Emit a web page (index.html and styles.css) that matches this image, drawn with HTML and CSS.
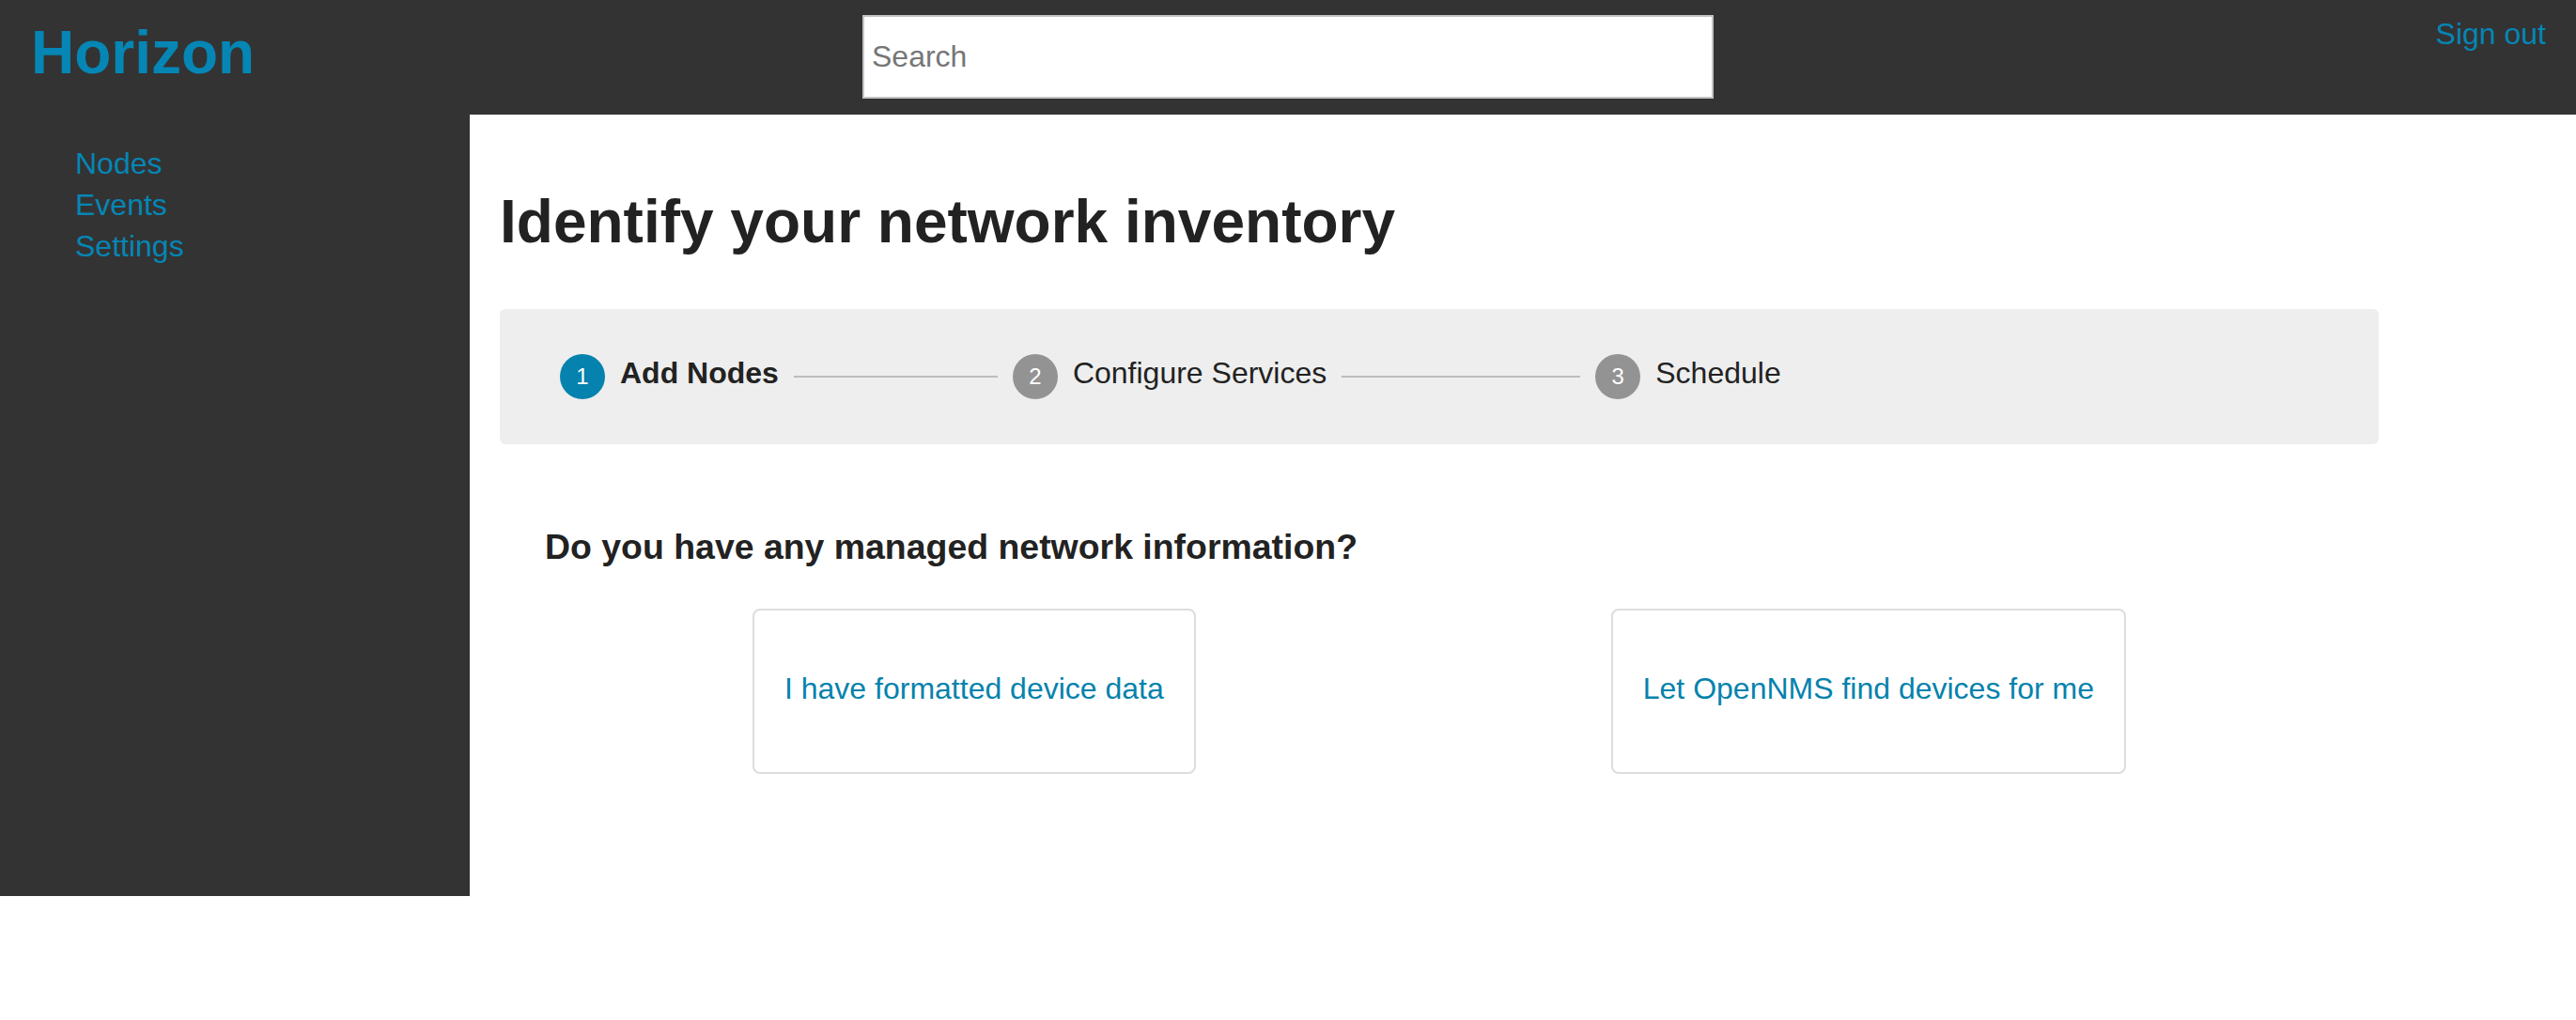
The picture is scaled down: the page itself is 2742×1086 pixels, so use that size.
FILE: index.html
```html
<!DOCTYPE html>
<html lang="en">
<head>
<meta charset="utf-8">
<title>Horizon</title>
<link rel="stylesheet" href="styles.css">
</head>
<body>
<header class="topbar">
  <a class="logo" href="#">Horizon</a>
  <input class="search" type="text" placeholder="Search">
  <a class="signout" href="#">Sign out</a>
</header>
<div class="layout">
  <nav class="sidebar">
    <a class="nav-link" href="#">Nodes</a>
    <a class="nav-link" href="#">Events</a>
    <a class="nav-link" href="#">Settings</a>
  </nav>
  <main class="main">
    <h1 class="title">Identify your network inventory</h1>
    <div class="stepper">
      <div class="step active"><span class="step-num">1</span><span class="step-label">Add Nodes</span></div>
      <span class="step-line line-a"></span>
      <div class="step"><span class="step-num">2</span><span class="step-label">Configure Services</span></div>
      <span class="step-line line-b"></span>
      <div class="step"><span class="step-num">3</span><span class="step-label">Schedule</span></div>
    </div>
    <section class="question">
      <h3 class="question-title">Do you have any managed network information?</h3>
      <div class="choices">
        <a class="choice" href="#">I have formatted device data</a>
        <a class="choice" href="#">Let OpenNMS find devices for me</a>
      </div>
    </section>
  </main>
</div>
</body>
</html>
```
FILE: styles.css
```css
* { box-sizing: border-box; }
html, body {
  margin: 0;
  padding: 0;
  background: #ffffff;
  font-family: "Liberation Sans", Arial, Helvetica, sans-serif;
  font-size: 32px;
  line-height: 44px;
  color: #222222;
}
a { text-decoration: none; color: #0582ad; }

.topbar {
  display: grid;
  grid-template-columns: 1fr 906px 1fr;
  align-items: start;
  height: 122px;
  padding: 0 32px;
  background: #333333;
}
.logo {
  justify-self: start;
  margin: 20px 0 0 1px;
  font-size: 64px;
  line-height: 72px;
  font-weight: bold;
  color: #0586b5;
}
.search {
  margin-top: 16px;
  width: 906px;
  height: 89px;
  border: 2px solid #c4c4c4;
  padding: 0 8px;
  font-family: "Liberation Sans", Arial, sans-serif;
  font-size: 32px;
  color: #222;
  background: #fff;
  outline: none;
}
.search::placeholder { color: #767676; }
.signout {
  justify-self: end;
  margin-top: 14px;
  font-size: 32px;
  line-height: 44px;
  color: #0586b5;
}

.layout {
  display: flex;
  align-items: stretch;
}
.sidebar {
  flex: 0 0 500px;
  background: #333333;
  display: flex;
  flex-direction: column;
  align-items: flex-start;
  padding: 30px 0 0 80px;
}
.nav-link {
  font-size: 32px;
  line-height: 44px;
  color: #0586b5;
}

.main {
  flex: 1;
  padding: 70px 32px 130px 32px;
}
.title {
  margin: 0 0 49px 0;
  font-size: 64px;
  line-height: 88px;
  font-weight: bold;
  color: #222222;
}
.stepper {
  max-width: 2000px;
  height: 144px;
  display: flex;
  align-items: center;
  padding: 0 64px;
  background: #eeeeee;
  border-radius: 6px;
}
.step {
  display: flex;
  align-items: center;
  gap: 16px;
}
.step-num {
  width: 48px;
  height: 48px;
  border-radius: 50%;
  background: #939393;
  color: #ffffff;
  font-size: 24px;
  line-height: 48px;
  text-align: center;
}
.step.active .step-num { background: #0582ad; }
.step-label {
  font-size: 32px;
  line-height: 44px;
  margin-bottom: 8px;
  color: #222222;
}
.step.active .step-label { font-weight: bold; }
.step-line {
  height: 2px;
  background: #bdbdbd;
  margin: 0 16px;
}
.line-a { flex: 0 0 217px; }
.line-b { flex: 0 0 254px; }

.question {
  max-width: 2000px;
  padding: 0 48px;
}
.question-title {
  margin: 83px 0 40px 0;
  font-size: 37.44px;
  line-height: 52px;
  font-weight: bold;
  color: #222222;
}
.choices {
  display: flex;
  justify-content: space-around;
}
.choice {
  display: block;
  padding: 61px 32px 67px 32px;
  border: 2px solid #dddddd;
  border-radius: 8px;
  font-size: 32px;
  line-height: 44px;
  color: #0582ad;
  white-space: nowrap;
}
```
